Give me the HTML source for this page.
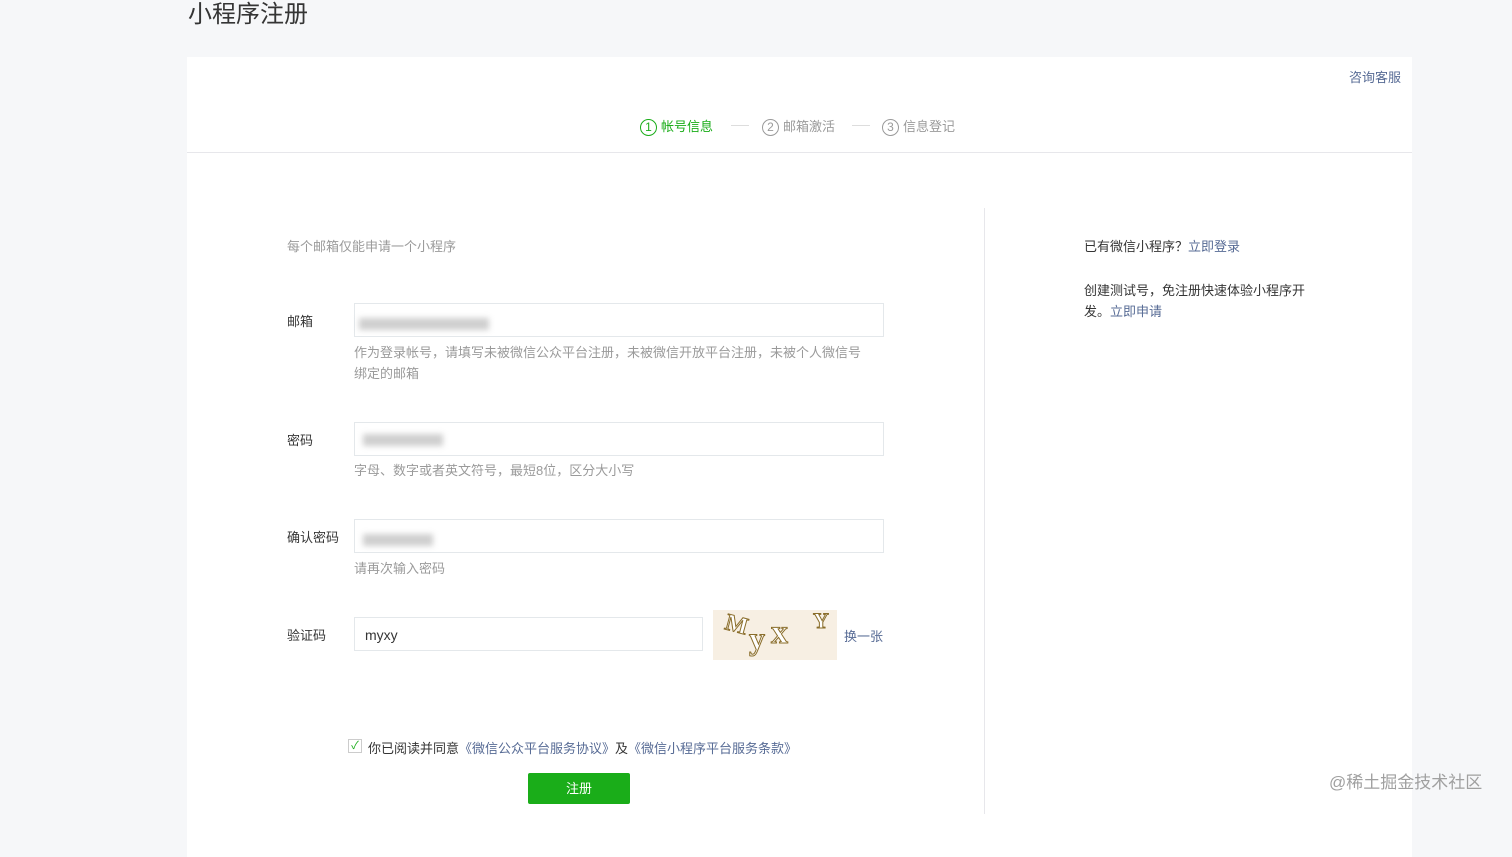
<!DOCTYPE html>
<html><head><meta charset="utf-8"><style>
*{margin:0;padding:0;box-sizing:border-box}
body{width:1512px;height:814px;background:#f6f7f9;font-family:"Liberation Sans","Noto Sans CJK SC",sans-serif;position:relative;overflow:hidden;color:#353535}
.abs{position:absolute}
.title{left:188px;top:-6px;font-size:24px;color:#353535}
.card{left:187px;top:57px;width:1225px;height:800px;background:#fff}
.hd{left:187px;top:152px;width:1225px;height:1px;background:#e7e7eb}
.s{font-size:13px;color:#9a9a9a;top:116px}
.c{display:inline-block;width:17px;height:17px;border:1px solid #9a9a9a;border-radius:50%;text-align:center;line-height:15px;font-size:12px;margin-right:4px;vertical-align:middle}
.line{top:125px;width:18px;height:1px;background:#ddd}
.lbl{font-size:13px;color:#353535;left:287px}
.inp{left:354px;width:530px;height:34px;border:1px solid #e4e8eb;background:#fff}
.tip{left:354px;font-size:13px;color:#9a9a9a;line-height:21px;width:515px}
.blur{position:absolute;background:#cfcfcf;filter:blur(3px);height:12px}
a{color:#576b95;text-decoration:none}
.cap span{position:absolute;color:#fff;-webkit-text-stroke:1px #8a6d2a;font-family:'Liberation Serif',serif;font-weight:bold}
</style></head><body>
<div class="abs title">小程序注册</div>
<div class="abs card"></div>
<div class="abs hd"></div>
<div class="abs" style="left:1349px;top:67px;font-size:13px;color:#576b95">咨询客服</div>
<div class="abs s" style="left:640px;color:#1aad19"><span class="c" style="border-color:#1aad19">1</span>帐号信息</div>
<div class="abs line" style="left:731px"></div>
<div class="abs s" style="left:762px"><span class="c">2</span>邮箱激活</div>
<div class="abs line" style="left:852px"></div>
<div class="abs s" style="left:882px"><span class="c">3</span>信息登记</div>
<div class="abs" style="left:984px;top:208px;width:1px;height:606px;background:#e7e7eb"></div>
<div class="abs" style="left:287px;top:236px;font-size:13px;color:#9a9a9a">每个邮箱仅能申请一个小程序</div>
<div class="abs" style="left:1084px;top:236px;font-size:13px">已有微信小程序？<a>立即登录</a></div>
<div class="abs" style="left:1084px;top:280px;font-size:13px;line-height:21px;width:235px">创建测试号，免注册快速体验小程序开发。<a>立即申请</a></div>

<div class="abs lbl" style="top:311px">邮箱</div>
<div class="abs inp" style="top:303px"><div class="blur" style="left:4px;top:14px;width:130px"></div></div>
<div class="abs tip" style="top:342px">作为登录帐号，请填写未被微信公众平台注册，未被微信开放平台注册，未被个人微信号绑定的邮箱</div>

<div class="abs lbl" style="top:430px">密码</div>
<div class="abs inp" style="top:422px"><div class="blur" style="left:8px;top:11px;width:80px"></div></div>
<div class="abs tip" style="top:460px">字母、数字或者英文符号，最短8位，区分大小写</div>

<div class="abs lbl" style="top:527px">确认密码</div>
<div class="abs inp" style="top:519px"><div class="blur" style="left:8px;top:14px;width:70px"></div></div>
<div class="abs tip" style="top:558px">请再次输入密码</div>

<div class="abs lbl" style="top:625px">验证码</div>
<div class="abs inp" style="top:617px;width:349px;font-size:14px;padding:9px 10px">myxy</div>
<div class="abs cap" style="left:713px;top:610px;width:124px;height:50px;background:#f7efe3">
<span style="left:12px;top:2px;font-size:24px;transform:rotate(15deg)">M</span>
<span style="left:36px;top:10px;font-size:32px">y</span>
<span style="left:58px;top:4px;font-size:34px">x</span>
<span style="left:100px;top:-2px;font-size:22px">Y</span>
</div>
<div class="abs" style="left:844px;top:626px;font-size:13px"><a>换一张</a></div>

<div class="abs" style="left:348px;top:739px;width:14px;height:14px;border:1px solid #ccc;color:#1aad19;font-size:11px;line-height:12px;text-align:center">✓</div>
<div class="abs" style="left:368px;top:738px;font-size:13px">你已阅读并同意<a>《微信公众平台服务协议》</a>及<a>《微信小程序平台服务条款》</a></div>
<div class="abs" style="left:528px;top:773px;width:102px;height:31px;background:#1aad19;border-radius:2px;color:#fff;font-size:13px;text-align:center;line-height:31px">注册</div>
<div class="abs" style="left:1329px;top:768px;font-size:17px;color:#a0a0a0">@稀土掘金技术社区</div>
</body></html>
